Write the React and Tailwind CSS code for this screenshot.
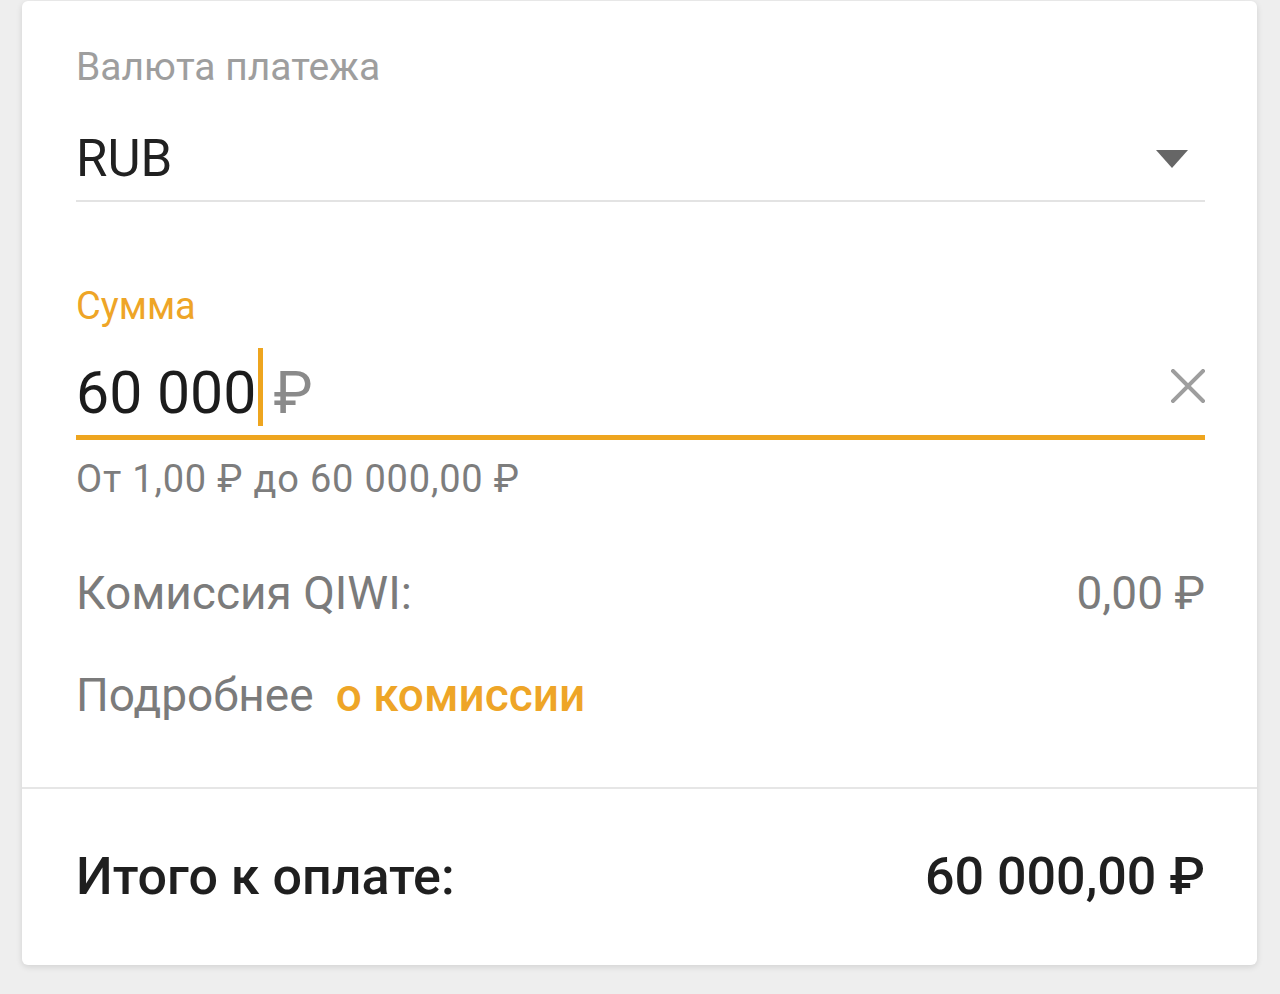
import React from 'react';

const Triangle = () => (
  <svg width="32" height="18" viewBox="0 0 32 18" className="shrink-0">
    <path d="M0 0 L32 0 L16 18 Z" fill="#666666" />
  </svg>
);

const ClearIcon = () => (
  <svg width="34" height="34" viewBox="0 0 34 34" className="shrink-0">
    <path d="M2 2 L32 32 M32 2 L2 32" stroke="#9e9e9e" strokeWidth="4" strokeLinecap="square" />
  </svg>
);

export default function App() {
  return (
    <div className="min-h-[994px] bg-[#eeeeee] pl-[22px] pr-[23px] pt-px" style={{ fontFamily: 'Roboto, "Noto Sans", sans-serif' }}>
      <div className="flex h-[964px] flex-col rounded-[6px] bg-white shadow-[0_2px_6px_rgba(0,0,0,0.12)]">
        {/* Form */}
        <div className="pl-[54px] pr-[52px] pt-[47px]">
          <div className="text-[39px] leading-none text-[#9e9e9e]">Валюта платежа</div>

          <div className="mt-[46px] flex items-center">
            <div className="text-[51px] leading-none text-[#212121]">RUB</div>
            <div className="ml-auto mr-[17px]">
              <Triangle />
            </div>
          </div>
          <div className="mt-[16px] h-[2px] bg-[#e3e3e3]" />

          <div className="mt-[85px] text-[38px] leading-none text-[#eea527]">Сумма</div>

          <div className="mt-[23px] flex h-[78px] items-start">
            <div className="mt-[15px] text-[59px] leading-none text-[#1c1c1c]">60 000</div>
            <div className="ml-[2px] h-[78px] w-[5px] bg-[#eea51f]" />
            <div className="ml-[10px] mt-[15px] text-[59px] leading-none text-[#8a8a8a]">₽</div>
            <div className="ml-auto mt-[21px]">
              <ClearIcon />
            </div>
          </div>
          <div className="mt-[9px] h-[5px] bg-[#eea51f]" />

          <div className="mt-[20px] text-[38px] leading-none tracking-[0.8px] text-[#7d7d7d]">От 1,00 ₽ до 60 000,00 ₽</div>

          <div className="mt-[72px] flex items-center justify-between text-[46px] leading-none text-[#7b7b7b]">
            <span>Комиссия QIWI:</span>
            <span>0,00 ₽</span>
          </div>

          <div className="mt-[56px] flex items-center text-[46px] leading-none">
            <span className="text-[#7b7b7b]">Подробнее</span>
            <span className="ml-[22px] font-medium text-[#eea527]">о комиссии</span>
          </div>
        </div>

        <div className="mt-auto h-[2px] bg-[#e6e6e6]" />

        {/* Total */}
        <div className="flex h-[176px] items-center justify-between pl-[54px] pr-[52px]">
          <span className="text-[52px] font-medium leading-none text-[#1f1f1f]">Итого к оплате:</span>
          <span className="text-[52px] font-medium leading-none text-[#1f1f1f]">60 000,00 ₽</span>
        </div>
      </div>
    </div>
  );
}
